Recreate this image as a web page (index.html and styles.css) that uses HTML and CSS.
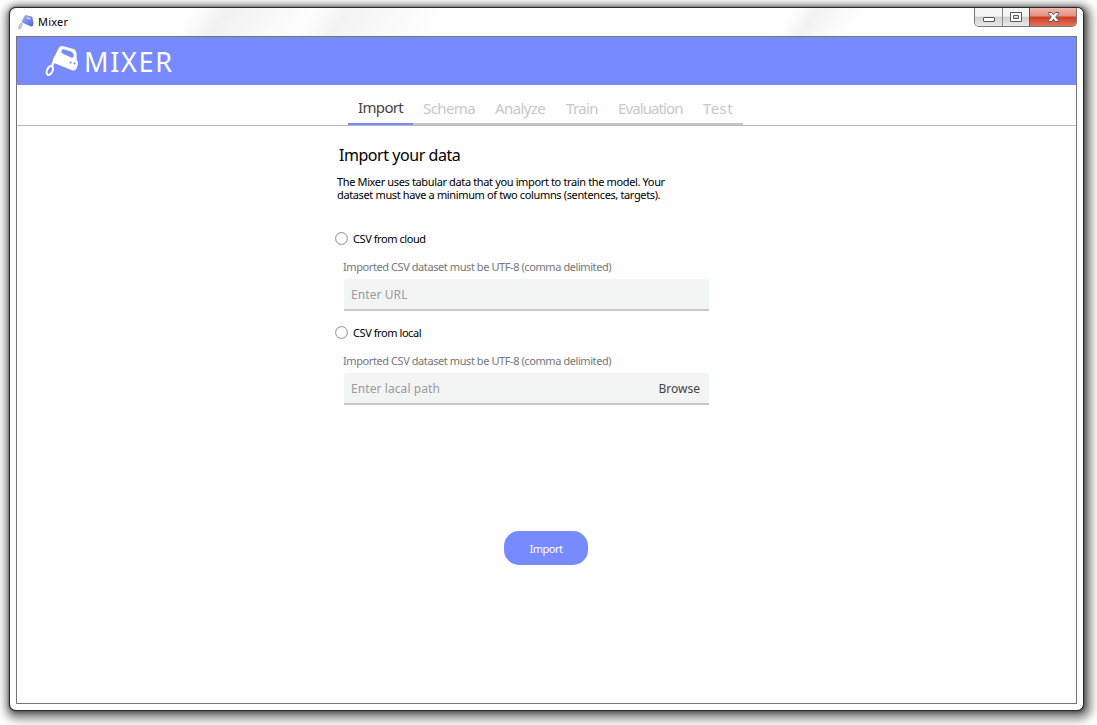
FILE: index.html
```html
<!DOCTYPE html>
<html lang="en">
<head>
<meta charset="utf-8">
<title>Mixer</title>
<link rel="stylesheet" href="styles.css">
</head>
<body>
<svg width="0" height="0" class="defs">
  <symbol id="mixer" viewBox="0 0 34 32">
    <path fill="currentColor" fill-rule="evenodd" d="M13.500 3.500Q15 .5 18.500 1.200L28.500 4Q31.300 5 31.500 8.500L31.700 15Q33.500 16 33 19L31.500 23.500Q30.500 26.500 27 25.200L9 18Q7 17 8 14.200ZM16.500 5.500Q15.800 7.500 17.500 8.500L25.500 12.300Q29 13.500 28.800 10.500Q28.500 7.500 26 6.500L19.500 4.500Q17.200 3.800 16.500 5.500ZM24.500 17.500a1.100 1.100 0 1 0 2.200 0a1.100 1.100 0 1 0-2.200 0M28.500 18.500a1.100 1.100 0 1 0 2.200 0a1.100 1.100 0 1 0-2.200 0"/>
    <path fill="none" stroke="currentColor" stroke-width="2.200" d="M9.500 15L7 21"/>
    <ellipse fill="none" stroke="currentColor" stroke-width="2" cx="4.800" cy="25.500" rx="2.700" ry="4.700" transform="rotate(25 4.800 25.500)"/>
  </symbol>
  <linearGradient id="glass" x1="0" y1="0" x2="1" y2="1">
    <stop offset="0" stop-color="#a9b4f8"/><stop offset="1" stop-color="#4f62d6"/>
  </linearGradient>
  <symbol id="mixer-color" viewBox="0 0 34 32">
    <path fill="url(#glass)" fill-rule="evenodd" d="M14 3.500Q15.500 .5 18.500 1.500L28.500 4.500Q31 5.500 31.300 8.500L33 19L31.500 23.500Q30.500 26.500 27 25.200L9 17.500Q7 16.500 8 14.200ZM18 5.500L18.500 7.500L26 10.500L26 8.500Z"/>
    <ellipse fill="#ddd" stroke="#aab0b8" stroke-width="2" cx="5" cy="25" rx="2.500" ry="6" transform="rotate(25 5 25)"/>
  </symbol>
</svg>
<div class="window">
  <div class="titlebar">
    <svg class="app-icon"><use href="#mixer-color"/></svg>
    <span class="app-title">Mixer</span>
    <div class="controls">
      <span class="control minimize"><svg width="28" height="18"><rect x="8.500" y="9.500" width="11" height="4" rx=".5"/></svg></span>
      <span class="control maximize"><svg width="26" height="18"><path fill-rule="evenodd" d="M7.500 4.500h11v9h-11zM10.500 7.500v3h5v-3z"/></svg></span>
      <span class="control close"><svg width="46" height="18"><path d="M18.500 4.500h3l2 2.300 2-2.300h3v1.200l-2.800 3.300 2.800 3.300v1.200h-3l-2-2.300-2 2.300h-3v-1.200l2.800-3.300-2.800-3.300z"/></svg></span>
    </div>
  </div>
  <div class="client">
    <header class="brand">
      <svg class="logo"><use href="#mixer"/></svg>
      <span class="brand-name">MIXER</span>
    </header>
    <nav class="tabs">
      <a class="tab active t-import">Import</a>
      <a class="tab t-schema">Schema</a>
      <a class="tab t-analyze">Analyze</a>
      <a class="tab t-train">Train</a>
      <a class="tab t-evaluation">Evaluation</a>
      <a class="tab t-test">Test</a>
    </nav>
    <main class="content">
      <h1>Import your data</h1>
      <p class="intro">The Mixer uses tabular data that you import to train the model. Your<br>dataset must have a minimum of two columns (sentences, targets).</p>
      <section class="source">
        <div class="option"><span class="radio"></span><span>CSV from cloud</span></div>
        <div class="hint">Imported CSV dataset must be UTF-8 (comma delimited)</div>
        <div class="field"><span class="placeholder">Enter URL</span></div>
      </section>
      <section class="source">
        <div class="option local"><span class="radio"></span><span>CSV from local</span></div>
        <div class="hint">Imported CSV dataset must be UTF-8 (comma delimited)</div>
        <div class="field"><span class="placeholder">Enter lacal path</span><span class="browse">Browse</span></div>
      </section>
      <div class="submit">Import</div>
    </main>
  </div>
</div>
</body>
</html>
```
FILE: styles.css
```css
* { box-sizing: border-box; }
body {
  margin: 0;
  height: 725px;
  padding: 7px 0 0 9px;
  overflow: hidden;
  background: #fff;
  font-family: "Noto Sans", sans-serif;
  font-size: 11px;
  color: #000;
  white-space: nowrap;
}
.defs { position: absolute; }
.window {
  width: 1075px;
  height: 704px;
  padding: 0 6px 6px;
  border: 1px solid #2b2b2b;
  border-radius: 7px;
  background: #fefefe;
  box-shadow: 0 0 1px #222, 1px 1px 4px 1px rgba(0,0,0,.45), 2px 3px 8px 6px rgba(0,0,0,.42);
}
.titlebar {
  display: flex;
  height: 28px;
  margin: 0 -6px;
  padding-left: 8px;
  border-radius: 6px 6px 0 0;
  background: linear-gradient(125deg, transparent 17%, #f1f1f1 20%, #fdfdfd 28%, #f3f3f3 31%, #fefefe 40%, #fefefe 72%, #f2f2f2 74%, #fefefe 78%);
}
.app-icon { width: 16px; height: 16px; margin-top: 6px; }
.app-title { margin: 6px 0 0 4px; line-height: 16px; letter-spacing: .2px; }
.controls {
  display: flex;
  width: 103px;
  height: 19px;
  margin-left: auto;
  margin-right: 6px;
  border: 1px solid #777;
  border-top: 0;
  border-radius: 0 0 5px 5px;
  overflow: hidden;
}
.control { height: 18px; background: linear-gradient(#f5f5f5 0 45%, #d0d0d0 50%, #e9e9e9); }
.control svg { display: block; fill: #fff; stroke: #555566; stroke-width: 1; }
.minimize { width: 28px; border-right: 1px solid #888; }
.maximize { width: 27px; border-right: 1px solid #844; }
.close { width: 46px; background: linear-gradient(#f0b8ae 0, #e58f80 45%, #cf3d24 50%, #e2735b); }
.client { height: 668px; border: 1px solid #777; background: #fefefe; }
.brand { display: flex; height: 48px; padding-left: 28px; background: #788aff; color: #fff; }
.logo { width: 34px; height: 32px; margin-top: 8px; }
.brand-name { margin-left: 5px; font-size: 27px; line-height: 50px; letter-spacing: 1.7px; }
.tabs {
  display: flex;
  height: 41px;
  padding: 3px 0 0 331px;
  border-bottom: 1px solid #b8b8b8;
}
.tab {
  height: 37px;
  padding: 0 0 0 10px;
  border-bottom: 2px solid #c6c6c6;
  color: #c8c8c8;
  font-size: 15px;
  line-height: 41px;
}
.tab.active { border-color: #788aff; color: #444; line-height: 39px; }
.t-import { width: 65px; letter-spacing: -.65px; }
.t-schema { width: 72px; letter-spacing: -.6px; }
.t-analyze { width: 71px; letter-spacing: -.6px; }
.t-train { width: 52px; letter-spacing: -.6px; }
.t-evaluation { width: 85px; letter-spacing: -.9px; }
.t-test { width: 50px; letter-spacing: .4px; }
.content { width: 374px; margin-left: 318px; padding-top: 18px; }
h1 { margin: 0 0 0 4px; font-size: 16px; font-weight: 400; line-height: 22px; letter-spacing: -.45px; }
.intro { margin: 9px 0 30px 2px; line-height: 13px; letter-spacing: -.365px; }
.source { height: 94px; }
.option { display: flex; align-items: center; height: 14px; gap: 5px; letter-spacing: -.43px; }
.radio { width: 13px; height: 13px; border: 1px solid #999; border-radius: 50%; background: #fff; box-shadow: inset 0 0 1px #aaa; }
.hint { margin: 14px 0 0 8px; line-height: 16px; color: #77777a; letter-spacing: -.42px; }
.field {
  display: flex;
  justify-content: space-between;
  width: 365px;
  height: 32px;
  margin: 4px 0 0 9px;
  padding: 0 9px 0 7px;
  border-bottom: 2px solid #c8c8c8;
  border-radius: 3px 3px 0 0;
  background: #f3f4f4;
  font-size: 12px;
  line-height: 31px;
}
.placeholder { color: #999ca2; letter-spacing: .08px; }
.browse { color: #444; }
.submit {
  width: 84px;
  height: 34px;
  margin: 112px 0 0 169px;
  border-radius: 15px;
  background: #788aff;
  color: #fff;
  line-height: 36px;
  text-align: center;
  letter-spacing: -.5px;
}
```
